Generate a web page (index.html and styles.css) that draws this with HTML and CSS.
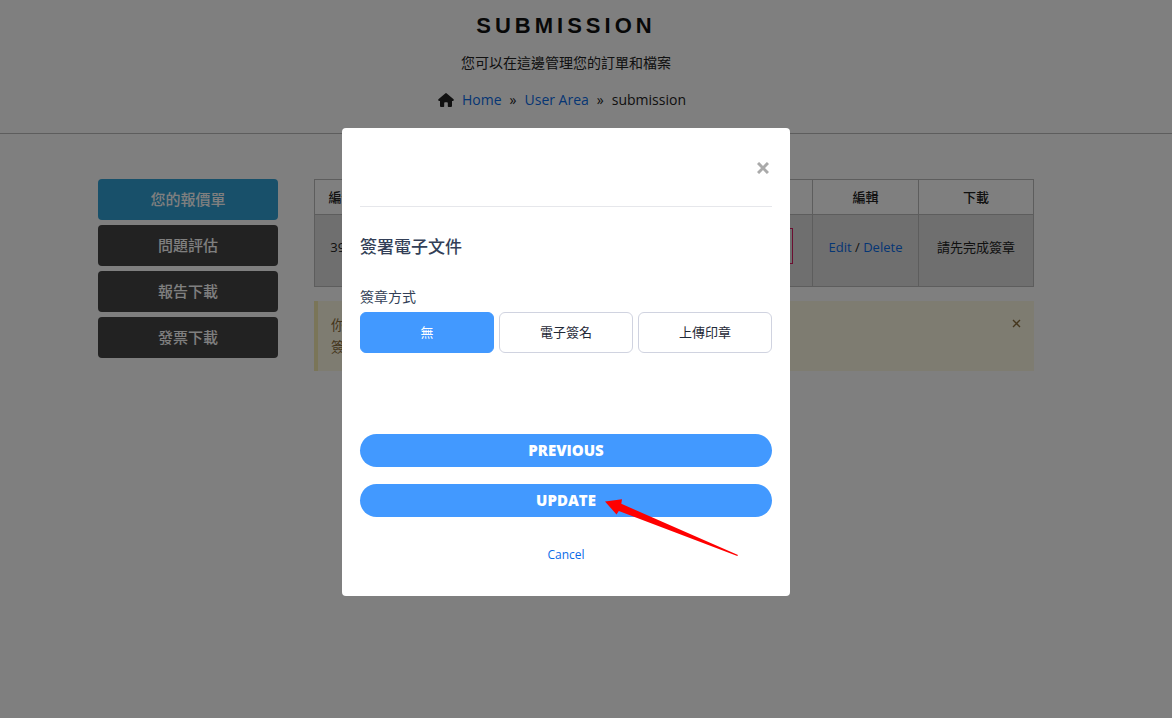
FILE: index.html
```html
<!DOCTYPE html>
<html lang="zh-Hant">
<head>
<meta charset="utf-8">
<meta name="viewport" content="width=device-width, initial-scale=1">
<title>Submission</title>
<link rel="stylesheet" href="styles.css">
</head>
<body>
<header class="page-header">
  <h1 class="page-title">SUBMISSION</h1>
  <p class="page-subtitle">您可以在這邊管理您的訂單和檔案</p>
  <nav class="breadcrumb" aria-label="Breadcrumb">
    <svg class="home-icon" viewBox="0 0 16 14" aria-hidden="true"><path d="M7.2 0.4 Q8 -0.2 8.8 0.4 L15.6 6.2 Q16.3 7.7 15 8 H14 V13 Q14 14 13 14 H10.5 Q9.8 14 9.8 13.2 V10 Q9.8 9.2 9 9.2 H7 Q6.2 9.2 6.2 10 V13.2 Q6.2 14 5.5 14 H3 Q2 14 2 13 V8 H1 Q-0.3 7.7 0.4 6.2 Z"/></svg>
    <a href="#">Home</a>
    <span>»</span>
    <a href="#">User Area</a>
    <span>»</span>
    <span>submission</span>
  </nav>
</header>
<main class="content">
  <nav class="sidebar" aria-label="User area">
    <a class="side-link active" href="#">您的報價單</a>
    <a class="side-link" href="#">問題評估</a>
    <a class="side-link" href="#">報告下載</a>
    <a class="side-link" href="#">發票下載</a>
  </nav>
  <section class="main-col">
    <table class="orders">
      <colgroup><col class="col-id"><col><col class="col-edit"><col class="col-download"></colgroup>
      <thead>
        <tr><th>編號</th><th></th><th>編輯</th><th>下載</th></tr>
      </thead>
      <tbody>
        <tr>
          <td>399</td>
          <td class="sign-cell"><button class="sign-button" type="button" aria-label="簽章"></button></td>
          <td><a href="#">Edit</a> / <a href="#">Delete</a></td>
          <td>請先完成簽章</td>
        </tr>
      </tbody>
    </table>
    <div class="notice">
      <p>你<br>簽</p>
      <button class="notice-close" type="button" aria-label="Close notice"><svg viewBox="0 0 9 9" aria-hidden="true"><path d="M1 1 L8 8 M8 1 L1 8"/></svg></button>
    </div>
  </section>
</main>
<div class="overlay">
  <form class="modal" role="dialog" aria-modal="true" aria-labelledby="dialog-title">
    <div class="modal-top">
      <button class="modal-close" type="button" aria-label="Close"><svg viewBox="0 0 12 12" aria-hidden="true"><path d="M1 1 L11 11 M11 1 L1 11"/></svg></button>
    </div>
    <h2 id="dialog-title" class="modal-title">簽署電子文件</h2>
    <fieldset class="sign-method">
      <legend>簽章方式</legend>
      <div class="options">
        <label class="option"><input type="radio" name="method" checked><span>無</span></label>
        <label class="option"><input type="radio" name="method"><span>電子簽名</span></label>
        <label class="option"><input type="radio" name="method"><span>上傳印章</span></label>
      </div>
    </fieldset>
    <div class="actions">
      <button class="pill" type="button">PREVIOUS</button>
      <button class="pill" type="submit">UPDATE</button>
    </div>
    <a class="cancel" href="#">Cancel</a>
    <svg class="arrow" viewBox="0 0 134 58" aria-hidden="true"><path d="M0 2.5 L17 0.2 L16.3 4.8 L133 56 L132.3 57 L13.8 12 L11.5 15.5 Z"/></svg>
  </form>
</div>
</body>
</html>
```

FILE: styles.css
```css
* { box-sizing: border-box; }

body {
  margin: 0;
  background: #fff;
  color: #222;
  font-family: "Open Sans", "Noto Sans CJK TC", sans-serif;
  font-size: 13px;
  line-height: 20px;
}

a { color: #0a6ce8; text-decoration: none; }
h1, h2, p { margin: 0; }
button { font-family: inherit; cursor: pointer; }

.page-header {
  display: flex;
  flex-direction: column;
  align-items: center;
  padding: 12px 40px 22px 0;
  border-bottom: 1px solid #bbb;
}

.page-title {
  font: bold 22px/28px "Liberation Sans", Arial, sans-serif;
  letter-spacing: 4px;
  color: #111;
}

.page-subtitle { margin-top: 12px; font-size: 14px; line-height: 22px; }

.breadcrumb {
  display: flex;
  align-items: center;
  gap: 8px;
  margin-top: 15px;
  padding-right: 8px;
  font-size: 14px;
  line-height: 22px;
}

.home-icon { width: 16px; height: 14px; fill: #222; }

.content {
  display: flex;
  align-items: flex-start;
  gap: 36px;
  max-width: 976px;
  margin: 45px auto 0;
  padding-right: 40px;
}

.sidebar {
  display: flex;
  flex: 0 0 180px;
  flex-direction: column;
  gap: 5px;
}

.side-link {
  padding: 10px;
  border-radius: 4px;
  background: #444;
  color: #fff;
  font-size: 15px;
  font-weight: 500;
  line-height: 21px;
  text-align: center;
}

.side-link.active { background: #30a0d4; }

.main-col { flex: 1; min-width: 0; }

.orders {
  width: 100%;
  border-collapse: collapse;
  table-layout: fixed;
  text-align: center;
}

.col-id { width: 54px; }
.col-edit { width: 106px; }
.col-download { width: 115px; }

.orders th, .orders td { border: 1px solid #bbb; }
.orders th { padding: 7px 0; font-weight: 500; }
.orders td { padding: 14px 0 21px; background: #dedede; }
.orders td.sign-cell { padding: 13px 19px 22px 0; text-align: right; }

.sign-button {
  width: 80px;
  height: 36px;
  border: 1px solid #d81b60;
  background: none;
  vertical-align: middle;
}

.notice {
  display: flex;
  justify-content: space-between;
  align-items: flex-start;
  margin-top: 14px;
  padding: 13px;
  border-left: 4px solid #f4ebb0;
  background: #fcf8e3;
  color: #8a6d3b;
  font-size: 14px;
  line-height: 22px;
}

.notice-close {
  display: flex;
  padding: 5px 0 0;
  border: 0;
  background: none;
}

.notice-close svg { width: 9px; height: 9px; fill: none; stroke: #8a6d3b; stroke-width: 1.4; }

.overlay {
  position: fixed;
  inset: 0;
  display: flex;
  justify-content: center;
  align-items: flex-start;
  padding: 128px 40px 0 0;
  background: rgba(0, 0, 0, 0.5);
}

.modal {
  position: relative;
  width: 448px;
  padding: 18px 18px 31px;
  border-radius: 4px;
  background: #fff;
  color: #333f57;
}

.modal-top {
  display: flex;
  justify-content: flex-end;
  padding: 16px 3px 32px;
  border-bottom: 1px solid #e6e7eb;
}

.modal-close { display: flex; padding: 0; border: 0; background: none; }
.modal-close svg { width: 12px; height: 12px; fill: none; stroke: #aaa; stroke-width: 3; }

.modal-title {
  margin-top: 28px;
  font-size: 17px;
  font-weight: 500;
  line-height: 24px;
}

.sign-method { margin: 27px 0 0; padding: 0; border: 0; }
.sign-method legend { padding: 0 0 4px; font-size: 14px; line-height: 22px; }

.options { display: grid; grid-template-columns: repeat(3, 1fr); gap: 5px; }

.option { position: relative; display: block; cursor: pointer; }
.option input { position: absolute; inset: 0; margin: 0; opacity: 0; }

.option span {
  display: block;
  padding: 10px;
  border: 1px solid #d0d3e0;
  border-radius: 6px;
  color: #1f2937;
  line-height: 19px;
  text-align: center;
}

.option input:checked + span {
  border-color: #4299ff;
  background: #4299ff;
  color: #fff;
}

.actions {
  display: flex;
  flex-direction: column;
  gap: 17px;
  margin-top: 81px;
}

.pill {
  padding: 6px;
  border: 0;
  border-radius: 20px;
  background: #4299ff;
  color: #fff;
  font-size: 15px;
  font-weight: 800;
  line-height: 21px;
}

.cancel {
  display: block;
  width: max-content;
  margin: 28px auto 0;
  font-size: 12px;
}

.arrow {
  position: absolute;
  left: 263px;
  top: 371px;
  width: 134px;
  height: 58px;
  fill: #f00;
  pointer-events: none;
}
```
